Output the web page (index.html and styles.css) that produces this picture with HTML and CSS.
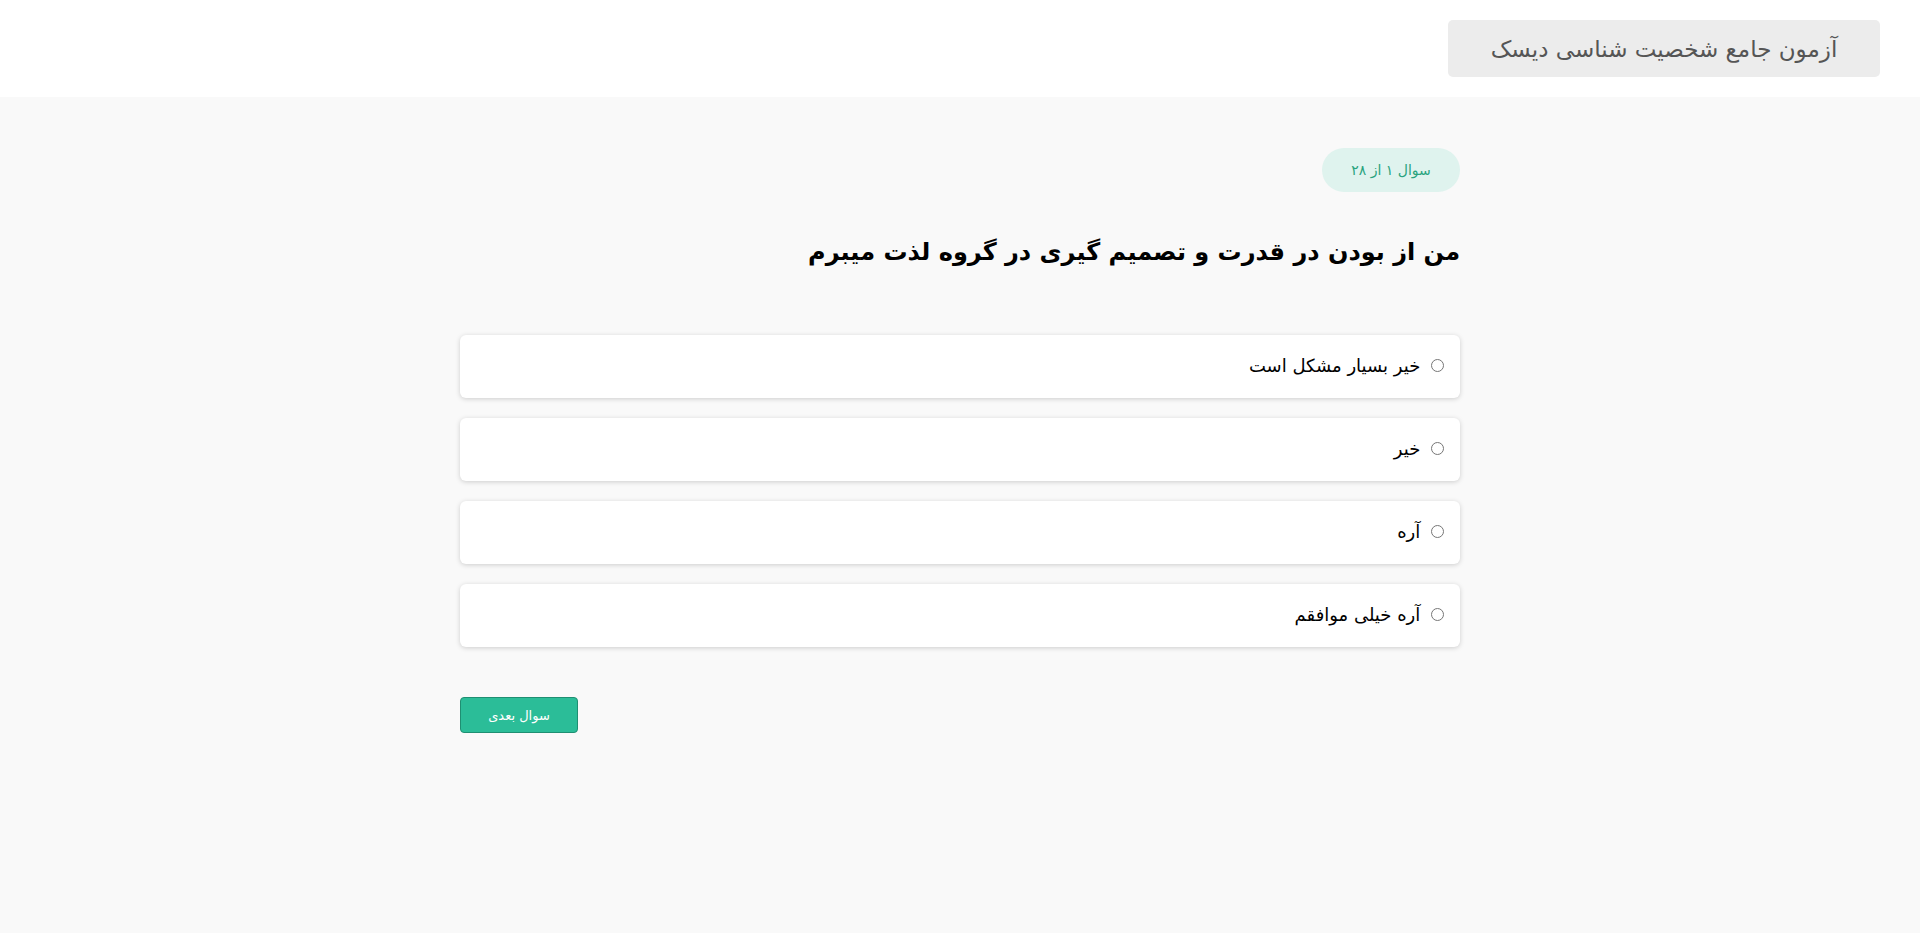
FILE: index.html
```html
<!DOCTYPE html>
<html lang="fa" dir="rtl">
<head>
    <meta charset="UTF-8">
    <meta name="viewport" content="width=device-width, initial-scale=1.0">
    <title>آزمون دیسک</title>
    <link rel="stylesheet" href="styles.css">
</head>
<body>

<!-- نوار بالا -->
<header class="topbar">
    <button class="title-btn">آزمون جامع شخصیت شناسی دیسک</button>
</header>

<main class="quiz">
    <div class="counter">سوال ۱ از ۲۸</div>

    <h2 class="question">من از بودن در قدرت و تصمیم گیری در گروه لذت میبرم</h2>

    <!-- گزینه ها -->
    <div class="options">
        <label class="option"><input type="radio" name="q1" value="1"> خیر بسیار مشکل است</label>
        <label class="option"><input type="radio" name="q1" value="2"> خیر</label>
        <label class="option"><input type="radio" name="q1" value="3"> آره</label>
        <label class="option"><input type="radio" name="q1" value="4"> آره خیلی موافقم</label>
    </div>

    <div class="actions">
        <button class="next-btn">سوال بعدی</button>
    </div>
</main>

</body>
</html>
```

FILE: styles.css
```css
body {
    margin: 0;
    font-family: Tahoma, "DejaVu Sans", sans-serif;
    background-color: #f9f9f9;
    color: #000;
}

.topbar {
    background-color: #fff;
    padding: 20px 40px;
    display: flex;
}

.title-btn {
    width: 432px;
    height: 57px;
    background-color: #ececec;
    color: #555;
    border: none;
    border-radius: 5px;
    font-family: inherit;
    font-size: 23px;
}

.quiz {
    width: 1000px;
    margin: 0 auto;
    padding-top: 51px;
}

.counter {
    display: inline-block;
    width: 138px;
    height: 44px;
    line-height: 44px;
    text-align: center;
    background-color: #dff3ee;
    color: #2aa37f;
    border-radius: 22px;
    font-size: 14px;
}

.question {
    margin: 30px 0 0;
    font-size: 24px;
    font-weight: bold;
    line-height: 60px;
}

.options {
    margin-top: 53px;
    display: flex;
    flex-direction: column;
    gap: 20px;
}

.option {
    display: block;
    height: 63px;
    box-sizing: border-box;
    padding: 16px 13px;
    background-color: #fff;
    border-radius: 6px;
    box-shadow: 0 1px 5px rgba(0, 0, 0, 0.18);
    font-size: 18px;
    line-height: 30px;
    cursor: pointer;
}

.actions {
    display: flex;
    justify-content: flex-end;
    margin-top: 50px;
}

.next-btn {
    width: 118px;
    height: 36px;
    background-color: #2bbd98;
    color: #fff;
    border: 1px solid #1f8f72;
    border-radius: 4px;
    font-family: inherit;
    font-size: 13px;
    cursor: pointer;
}
```
